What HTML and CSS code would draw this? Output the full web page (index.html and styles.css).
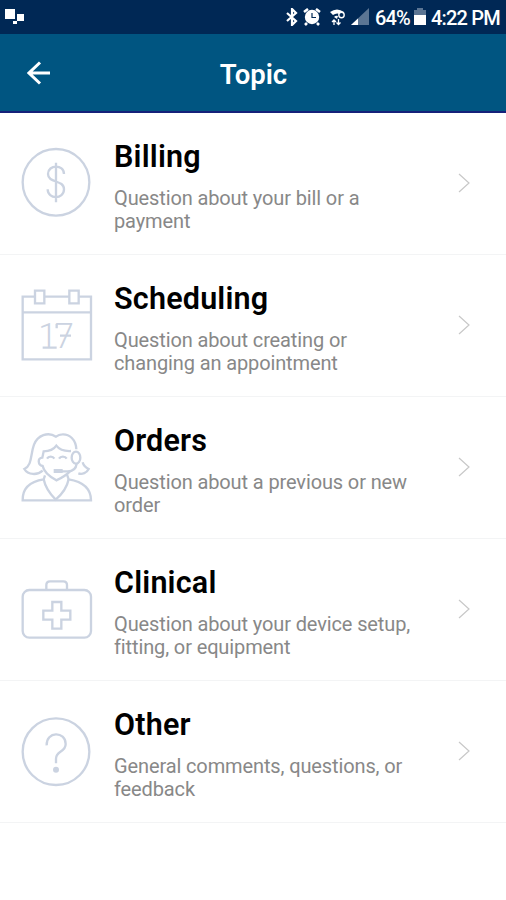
FILE: index.html
```html
<!DOCTYPE html>
<html lang="en">
<head>
  <meta charset="UTF-8">
  <meta name="viewport" content="width=device-width, initial-scale=1.0">
  <title>Topic</title>
  <link rel="stylesheet" href="styles.css">
</head>
<body>
  <div class="status-bar">
    <svg class="notification" viewBox="0 0 20 18" width="20" height="18">
      <path d="M0 1h10v10H0zM12 6h7v7h-7zM8 13h4v3H8z"/>
    </svg>
    <div class="status-icons">
      <svg class="bluetooth" viewBox="0 0 12 18" width="12" height="18">
        <path d="M1 5l9 8-4 4V1l4 4-9 8"/>
      </svg>
      <svg class="alarm" viewBox="0 0 18 18" width="18" height="18">
        <circle cx="9" cy="9" r="7.2" fill="#fff"/>
        <path d="M1 4l4-3M17 4l-4-3M4 15l-2 2M14 15l2 2" stroke="#fff" stroke-width="2.6"/>
        <path d="M9 5v4.500h4" fill="none" stroke="#002855" stroke-width="1.200"/>
      </svg>
      <svg class="wifi" viewBox="0 0 18 18" width="18" height="18">
        <path d="M1 4Q8-1 15 4L13 7Q8 4 4 7zM5 9Q7 7 9 8L8 11z" fill="#fff"/>
        <circle cx="12.500" cy="7" r="2.700" fill="#002855" stroke="#fff" stroke-width="1.400"/>
        <path d="M5 17v-5m-2 2l2-2 2 2M9.500 11v5m-2-1.500l2 2 2-2" fill="none" stroke="#fff" stroke-width="1.300"/>
      </svg>
      <svg class="signal" viewBox="0 0 18 18" width="18" height="18">
        <path d="M0 17L18 0v17z" fill="#5b7593"/>
        <path d="M0 17l7-6.600V17z" fill="#fff"/>
      </svg>
      <span class="battery-text">64%</span>
      <svg class="battery" viewBox="0 0 12 18" width="12" height="18">
        <path d="M0 2h3V0h6v2h3v6H0z" fill="#5b7593"/>
        <path d="M0 7h12v10H0z" fill="#fff"/>
      </svg>
      <span class="time">4:22 PM</span>
    </div>
  </div>

  <header class="header">
    <svg class="back" viewBox="0 0 24 24" width="24" height="24">
      <path d="M23 12H2M13 1.500L2 12l11 10.500"/>
    </svg>
    <h1>Topic</h1>
  </header>

  <main class="topics">
    <div class="topic">
      <svg class="icon" viewBox="0 0 300 300">
        <circle cx="138" cy="142" r="100"/>
        <path d="M138 83v119M162 117c0-30-48-29-48 0 0 29 48 16 48 46 0 31-49 31-49 0"/>
      </svg>
      <div class="topic-text">
        <h2>Billing</h2>
        <p>Question about your bill or a payment</p>
      </div>
      <svg class="chevron" viewBox="0 0 14 22" width="14" height="22"><path d="M2 2l10 9-10 9"/></svg>
    </div>

    <div class="topic">
      <svg class="icon" viewBox="0 -9 300 300">
        <path d="M74 50H38v188h205V50h-36M104 50h73M38 97h205"/>
        <path d="M75 32h28v38H75zM178 32h28v38h-28z"/>
        <text class="date" x="85 134" y="205">17</text>
        <path class="date-serif" d="M98 203h42M140 145v-13M150 167h33"/>
      </svg>
      <div class="topic-text">
        <h2>Scheduling</h2>
        <p>Question about creating or changing an appointment</p>
      </div>
      <svg class="chevron" viewBox="0 0 14 22" width="14" height="22"><path d="M2 2l10 9-10 9"/></svg>
    </div>

    <div class="topic">
      <svg class="icon" viewBox="0 -3 300 300">
        <!-- hair -->
        <path d="M199 88C198 58 178 42 157 43c-8 0-14 3-19 7-24-16-55-4-66 24-11 29-5 62-29 73 11 19 40 19 55 5"/>
        <path d="M218 127c2 9 10 16 18 20-6 12-19 17-31 13"/>
        <!-- face -->
        <path d="M183 93c-19 1-35-4-44-16-9 13-21 17-38 17l-4 19c-15 0-14 22 1 25 4 20 23 33 41 43 18-8 32-18 41-27"/>
        <path d="M111 116c5-8 17-8 22 0M147 116c5-8 18-8 23 0"/>
        <!-- headset -->
        <ellipse cx="198" cy="113" rx="13" ry="18"/>
        <path d="M200 131c-2 18-12 23-27 23h-40"/>
        <path class="mic" d="M131 153h27"/>
        <!-- shoulders -->
        <path d="M105 166l-4 12c-38 6-64 24-63 63h205c0-37-25-56-67-63l-5-14"/>
        <path d="M101 178c5 25 19 44 36 61 20-17 34-36 39-61"/>
      </svg>
      <div class="topic-text">
        <h2>Orders</h2>
        <p>Question about a previous or new order</p>
      </div>
      <svg class="chevron" viewBox="0 0 14 22" width="14" height="22"><path d="M2 2l10 9-10 9"/></svg>
    </div>

    <div class="topic">
      <svg class="icon" viewBox="0 -12 300 300">
        <rect x="38" y="75" width="205" height="143" rx="20"/>
        <path d="M109 74V60q0-11 11-11h40q11 0 11 11v14"/>
        <path d="M127 111h27v26h27v27h-27v27h-27v-27h-27v-27h27z"/>
      </svg>
      <div class="topic-text">
        <h2>Clinical</h2>
        <p>Question about your device setup, fitting, or equipment</p>
      </div>
      <svg class="chevron" viewBox="0 0 14 22" width="14" height="22"><path d="M2 2l10 9-10 9"/></svg>
    </div>

    <div class="topic">
      <svg class="icon" viewBox="0 -6 300 300">
        <circle cx="138" cy="140" r="100"/>
        <path d="M110 121c-2-43 57-43 57-4 0 26-29 19-29 44v14"/>
        <circle class="dot" cx="138" cy="194" r="9"/>
      </svg>
      <div class="topic-text">
        <h2>Other</h2>
        <p>General comments, questions, or feedback</p>
      </div>
      <svg class="chevron" viewBox="0 0 14 22" width="14" height="22"><path d="M2 2l10 9-10 9"/></svg>
    </div>
  </main>
</body>
</html>
```

FILE: styles.css
```css
* {
  margin: 0;
  padding: 0;
  box-sizing: border-box;
}

body {
  font-family: Roboto, Arial, sans-serif;
  background-color: #fff;
  color: #000;
}

.status-bar {
  height: 34px;
  padding: 0 6px 0 5px;
  background-color: #002855;
  color: #fff;
  display: flex;
  justify-content: space-between;
  align-items: center;
}

.notification {
  fill: #fff;
}

.status-icons {
  display: flex;
  align-items: center;
  font-size: 20px;
  font-weight: 500;
  line-height: 38px;
  letter-spacing: -0.8px;
}

.status-icons span {
  padding-top: 2px;
}

.bluetooth {
  fill: none;
  stroke: #fff;
  stroke-width: 2.2;
}

.alarm {
  margin-left: 5px;
}

.wifi {
  margin-left: 8px;
}

.signal {
  margin-left: 4px;
}

.battery-text {
  margin-left: 6px;
}

.battery {
  margin: 0 5px 0 4px;
}

.header {
  height: 79px;
  padding: 0 26px 0 27px;
  background-color: #005581;
  border-bottom: 2px solid #15217a;
  color: #fff;
  display: grid;
  grid-template-columns: 24px 1fr 24px;
  align-items: center;
}

.header h1 {
  font-size: 27.5px;
  font-weight: 600;
  text-align: center;
  padding-top: 4px;
}

.back {
  fill: none;
  stroke: #fff;
  stroke-width: 3;
}

.topic {
  height: 142px;
  padding: 0 35px 0 10px;
  border-bottom: 1px solid #f3f4f5;
  display: flex;
}

.icon {
  width: 100px;
  height: 100px;
  margin-top: 22px;
  flex-shrink: 0;
  fill: none;
  stroke: #cbd3e1;
  stroke-width: 7;
}

.icon .mic {
  stroke-width: 12;
}

.icon .dot {
  fill: #cbd3e1;
  stroke: none;
}

.icon .date {
  font-size: 103px;
  font-weight: 300;
  fill: #cbd3e1;
  stroke: none;
}

.topic-text {
  width: 310px;
  margin-left: 4px;
  padding-top: 26px;
}

.topic-text h2 {
  font-size: 30.5px;
  font-weight: 600;
  line-height: 36px;
  letter-spacing: 0.2px;
}

.topic-text p {
  margin-top: 12px;
  color: #888;
  font-size: 20px;
  line-height: 23px;
  letter-spacing: -0.12px;
}

.chevron {
  margin: 59px 0 0 auto;
  fill: none;
  stroke: #c8c8c8;
  stroke-width: 1.2;
}
```
